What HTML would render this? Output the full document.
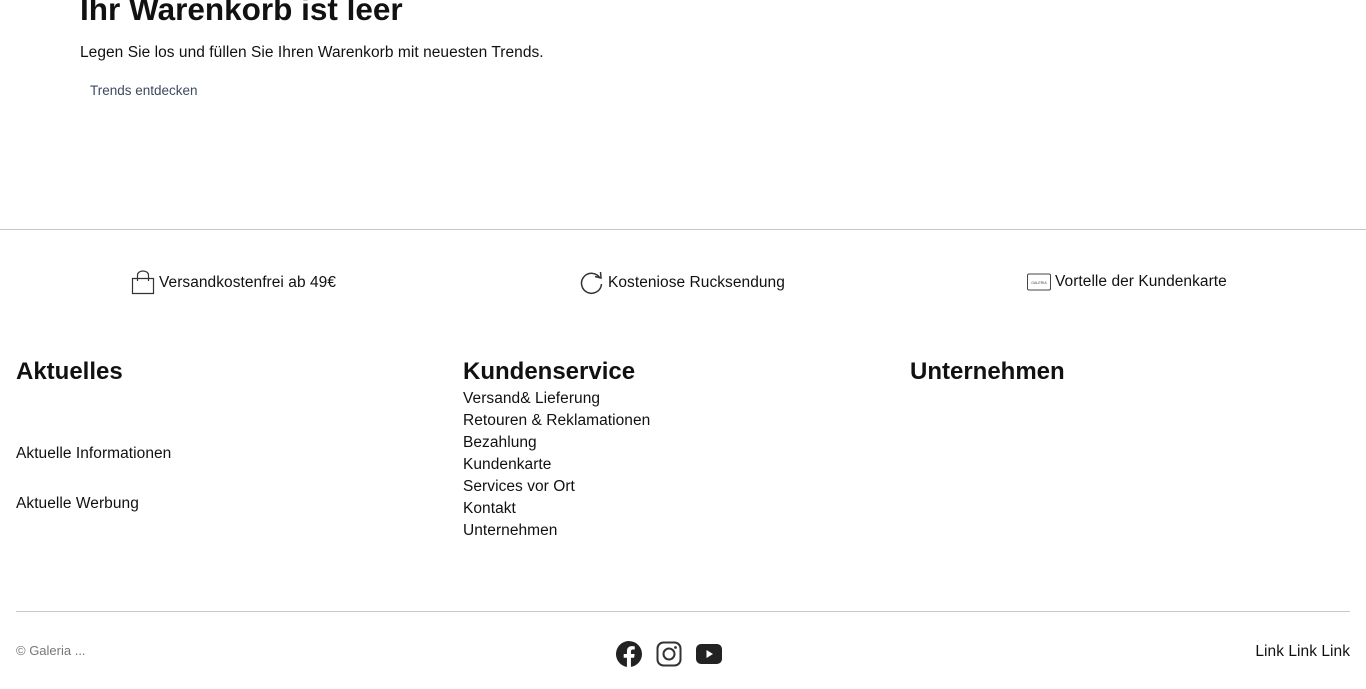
<!DOCTYPE html>
<html><head><meta charset="utf-8"><style>
*{margin:0;padding:0;box-sizing:border-box}
body{width:1366px;height:689px;overflow:hidden;background:#fff;font-family:"Liberation Sans",sans-serif;color:#111;position:relative}
.a{position:absolute;white-space:nowrap}
h1{font-size:31.5px;font-weight:700}
.t15{font-size:15.5px;letter-spacing:0.05px}
.h{font-size:24px;font-weight:700}
.hr{position:absolute;height:1px;background:#c8c8c8}
.ic{display:flex;align-items:center;gap:4px}
</style></head><body>
<h1 class="a" style="left:80px;top:-9px">Ihr Warenkorb ist leer</h1>
<div class="a t15" style="left:80px;top:44px">Legen Sie los und füllen Sie Ihren Warenkorb mit neuesten Trends.</div>
<div class="a" style="left:90px;top:83px;font-size:13.5px;color:#3c4a5e">Trends entdecken</div>
<div class="hr" style="left:0;top:229px;width:1366px"></div>

<div class="a ic t15" style="left:131px;top:270px">
<svg width="24" height="25" viewBox="0 0 24 25"><path d="M1.5 8.5h21v15h-21z" fill="none" stroke="#333" stroke-width="1.2"/><path d="M6.5 11V5a5.5 4 0 0 1 11 0V11" fill="none" stroke="#333" stroke-width="1.2"/></svg>
<span>Versandkostenfrei ab 49€</span></div>
<div class="a ic t15" style="left:579px;top:270px">
<svg width="25" height="25" viewBox="0 0 25 25"><path d="M21 8A10 10 0 1 0 22.5 14" fill="none" stroke="#333" stroke-width="1.5"/><path d="M16 6.5l6 1.5 -0.5-6" fill="none" stroke="#333" stroke-width="1.5"/></svg>
<span>Kosteniose Rucksendung</span></div>
<div class="a ic t15" style="left:1027px;top:273px">
<svg width="24" height="18" viewBox="0 0 24 18"><rect x="0.5" y="1" width="23" height="16" rx="1.5" fill="none" stroke="#444"/><text x="12" y="11" font-size="3.5" text-anchor="middle" fill="#444" font-family="Liberation Sans">GALERIA</text></svg>
<span>Vortelle der Kundenkarte</span></div>

<div class="a h" style="left:16px;top:358px">Aktuelles</div>
<div class="a t15" style="left:16px;top:445px">Aktuelle Informationen</div>
<div class="a t15" style="left:16px;top:495px">Aktuelle Werbung</div>

<div class="a h" style="left:463px;top:358px">Kundenservice</div>
<div class="a t15" style="left:463px;top:388px;line-height:22px">Versand&amp; Lieferung<br>Retouren &amp; Reklamationen<br>Bezahlung<br>Kundenkarte<br>Services vor Ort<br>Kontakt<br>Unternehmen</div>

<div class="a h" style="left:910px;top:358px">Unternehmen</div>

<div class="hr" style="left:16px;top:611px;width:1334px"></div>
<div class="a" style="left:16px;top:643px;font-size:13px;color:#777">© Galeria ...</div>
<svg class="a" style="left:616px;top:641px" width="26" height="26" viewBox="0 0 24 24"><path fill="#222" d="M24 12a12 12 0 1 0-13.9 11.9v-8.4H7.1V12h3V9.4c0-3 1.8-4.7 4.5-4.7 1.3 0 2.7.2 2.7.2v3h-1.5c-1.5 0-2 .9-2 1.9V12h3.4l-.5 3.5h-2.9v8.4A12 12 0 0 0 24 12z"/></svg>
<svg class="a" style="left:656px;top:641px" width="26" height="26" viewBox="0 0 26 26"><rect x="1.5" y="1.5" width="23" height="23" rx="6" fill="none" stroke="#333" stroke-width="2"/><circle cx="13" cy="13" r="5.5" fill="none" stroke="#333" stroke-width="2"/><circle cx="19.5" cy="6.5" r="1.4" fill="#333"/></svg>
<svg class="a" style="left:696px;top:643px" width="26" height="22" viewBox="0 0 26 22"><rect x="0" y="1" width="26" height="20" rx="5" fill="#222"/><path d="M10.5 7v8l6.5-4z" fill="#fff"/></svg>
<div class="a t15" style="right:16px;top:643px">Link Link Link</div>
</body></html>
